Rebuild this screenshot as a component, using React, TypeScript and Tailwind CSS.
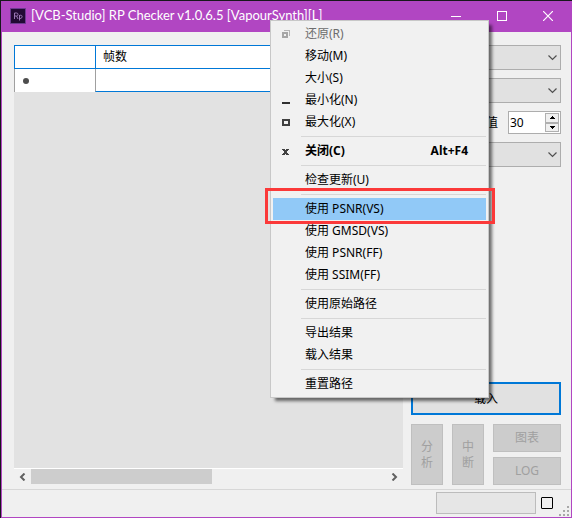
import type { ReactNode } from "react";

const latin = "font-['Noto_Sans','Noto_Sans_CJK_SC',sans-serif]";

type Entry =
  | { kind: "separator" }
  | {
      kind: "item";
      label: string;
      shortcut?: string;
      icon?: ReactNode;
      disabled?: boolean;
      bold?: boolean;
      active?: boolean;
    };

const separator: Entry = { kind: "separator" };

const restoreIcon = (
  <svg width="9" height="9" viewBox="0 0 9 9" fill="none" shapeRendering="crispEdges">
    <path d="M3 .5h5.500v5" stroke="#b5b5b5" />
    <path d="M2 3h4v4H2z" stroke="#a6a6a6" strokeWidth="2" />
  </svg>
);

const minimizeIcon = (
  <svg width="9" height="9" viewBox="0 0 9 9" shapeRendering="crispEdges">
    <path d="M1 6h8v2H1z" fill="#303030" />
  </svg>
);

const maximizeIcon = (
  <svg width="9" height="9" viewBox="0 0 9 9" shapeRendering="crispEdges">
    <path d="M1 1h8v7H1zM3 3v3h4V3z" fill="#404040" fillRule="evenodd" />
  </svg>
);

const closeIcon = (
  <svg width="9" height="9" viewBox="0 0 9 9" shapeRendering="crispEdges">
    <path
      d="M1 2h3v1h1V2h3v1H7v1H6v2h1v1h1v1H5V7H4v1H1V7h1V6h1V4H2V3H1z"
      fill="#404040"
    />
  </svg>
);

const entries: Entry[] = [
  { kind: "item", label: "还原(R)", icon: restoreIcon, disabled: true },
  { kind: "item", label: "移动(M)" },
  { kind: "item", label: "大小(S)" },
  { kind: "item", label: "最小化(N)", icon: minimizeIcon },
  { kind: "item", label: "最大化(X)", icon: maximizeIcon },
  separator,
  { kind: "item", label: "关闭(C)", shortcut: "Alt+F4", icon: closeIcon, bold: true },
  separator,
  { kind: "item", label: "检查更新(U)" },
  separator,
  { kind: "item", label: "使用 PSNR(VS)", active: true },
  { kind: "item", label: "使用 GMSD(VS)" },
  { kind: "item", label: "使用 PSNR(FF)" },
  { kind: "item", label: "使用 SSIM(FF)" },
  separator,
  { kind: "item", label: "使用原始路径" },
  separator,
  { kind: "item", label: "导出结果" },
  { kind: "item", label: "载入结果" },
  separator,
  { kind: "item", label: "重置路径" },
];

function SystemMenu() {
  return (
    <div
      role="menu"
      className="absolute top-5 left-[270px] z-10 w-[219px] border border-[#c8c8c8] bg-[#f1f1f1] p-0.5 shadow-[4px_4px_3px_-1px_rgba(0,0,0,0.55)]"
    >
      {entries.map((entry, index) =>
        entry.kind === "separator" ? (
          <div key={index} role="separator" className="ml-7 py-[3px]">
            <div className="h-px bg-[#d7d7d7]" />
          </div>
        ) : (
          <div key={index} className="relative">
            <button
              type="button"
              role="menuitem"
              disabled={entry.disabled}
              className={`flex h-[22px] w-full items-center pr-[18px] text-left ${
                entry.active ? "bg-[#91c9f7]" : ""
              } ${entry.disabled ? "text-[#6d6d6d]" : "text-black"} ${
                entry.bold ? "font-bold" : ""
              }`}
            >
              <span className="flex w-8 justify-start pl-2">{entry.icon}</span>
              <span className="flex-1">{entry.label}</span>
              <span>{entry.shortcut}</span>
            </button>
            {entry.active && (
              <div className="pointer-events-none absolute -top-2.5 -right-[9px] -bottom-1 -left-2 z-10 border-3 border-[#fb3939]" />
            )}
          </div>
        ),
      )}
    </div>
  );
}

function TitleBar() {
  return (
    <header className="flex h-[30px] shrink-0 items-center bg-[#b146c2] pb-0.5 pl-2 text-white">
      <svg width="16" height="16" viewBox="0 0 16 16" fill="none" className="mr-[5px]">
        <path d="M.5.5h15v15H.5z" fill="#210a33" stroke="#6c3b91" />
        <path
          d="M4.500 11v-6h2a1.500 1.500 0 0 1 0 3h-2m2 0 1.500 3M9.500 12.500V7m0 .5c3.500-1.500 3.500 3.500 0 3"
          stroke="#9a78b5"
        />
      </svg>
      <h1 className="flex-1 truncate font-['Lato','Noto_Sans_CJK_SC',sans-serif] text-[13px]">
        [VCB-Studio] RP Checker v1.0.6.5 [VapourSynth][L]
      </h1>
      <button type="button" aria-label="最小化" className="flex h-full w-[46px] items-center justify-center">
        <svg width="10" height="10" stroke="white" fill="none" shapeRendering="crispEdges">
          <path d="M0 5.500h10" />
        </svg>
      </button>
      <button type="button" aria-label="最大化" className="flex h-full w-[46px] items-center justify-center">
        <svg width="10" height="10" stroke="white" fill="none" shapeRendering="crispEdges">
          <path d="M.5.5h9v9h-9z" />
        </svg>
      </button>
      <button type="button" aria-label="关闭" className="flex h-full w-[46px] items-center justify-center">
        <svg width="10" height="10" stroke="white" fill="none">
          <path d="m0 0 10 10M10 0 0 10" strokeWidth="1.200" />
        </svg>
      </button>
    </header>
  );
}

function ResultTable() {
  return (
    <section className="flex min-w-0 flex-1 flex-col">
      <div className="flex-1 bg-[#e2e2e2]">
        <table className="w-full table-fixed border-separate border-spacing-0 bg-white text-left">
          <thead>
            <tr className="h-6">
              <th className="w-[81px] border-y border-l border-[#0078d7]" aria-label="行" />
              <th className="border border-[#0078d7] px-[7px] py-0 font-normal">帧数</th>
            </tr>
          </thead>
          <tbody>
            <tr className="h-[23px]">
              <td className="border-l border-[#a0a0a0] px-2 py-0">
                <div className="size-1.5 rounded-full bg-[#4d4d4d]" />
              </td>
              <td className="border-b border-l border-b-[#0078d7] border-l-[#a0a0a0]" />
            </tr>
          </tbody>
        </table>
      </div>
      <div className="flex h-[17px] items-stretch border-t border-white pb-px">
        <button type="button" aria-label="向左滚动" className="flex w-[17px] items-center justify-center">
          <svg width="7" height="8" fill="none" stroke="#606060" strokeWidth="2">
            <path d="M5.500.5 2 4l3.500 3.500" />
          </svg>
        </button>
        <div className="flex-1">
          <div className="h-full w-[51%] bg-[#cdcdcd]" />
        </div>
        <button type="button" aria-label="向右滚动" className="flex w-[17px] items-center justify-center">
          <svg width="7" height="8" fill="none" stroke="#606060" strokeWidth="2">
            <path d="M1.500.5 5 4 1.500 7.500" />
          </svg>
        </button>
      </div>
    </section>
  );
}

function Dropdown({ label }: { label: string }) {
  return (
    <div className="relative">
      <select
        aria-label={label}
        className="block h-[25px] w-full appearance-none border border-[#adadad] bg-[#e1e1e1] px-1"
      >
        <option />
      </select>
      <svg
        width="9"
        height="6"
        fill="none"
        stroke="#505050"
        className="pointer-events-none absolute top-2.5 right-1"
      >
        <path d="m.5.5 4 4 4-4" strokeWidth="1.200" />
      </svg>
    </div>
  );
}

function ThresholdField() {
  return (
    <div className="flex items-center justify-end gap-2.5">
      <label htmlFor="threshold">阈值</label>
      <div className="flex h-[23px] w-[53px] border border-[#adadad] bg-white p-px">
        <input
          id="threshold"
          type="text"
          inputMode="numeric"
          defaultValue="30"
          className="w-full min-w-0 flex-1 text-black outline-none"
        />
        <div className="flex w-3.5 flex-col">
          <button
            type="button"
            aria-label="增加"
            className="flex flex-1 items-center justify-center border border-[#b0b0b0] bg-[#f0f0f0]"
          >
            <svg width="5" height="3" fill="black" shapeRendering="crispEdges">
              <path d="M2 0h1v1h1v1h1v1H0V2h1V1h1z" />
            </svg>
          </button>
          <button
            type="button"
            aria-label="减少"
            className="flex flex-1 items-center justify-center border border-[#b0b0b0] bg-[#f0f0f0]"
          >
            <svg width="5" height="3" fill="black" shapeRendering="crispEdges">
              <path d="M0 0h5v1H4v1H3v1H2V2H1V1H0z" />
            </svg>
          </button>
        </div>
      </div>
    </div>
  );
}

const disabledButton = "border border-[#bfbfbf] bg-[#cccccc] text-[#a0a0a0]";

function ControlPanel() {
  return (
    <aside className="flex w-[150px] shrink-0 flex-col gap-2">
      <Dropdown label="原始文件" />
      <Dropdown label="处理文件" />
      <ThresholdField />
      <Dropdown label="平面" />
      <button
        type="button"
        className="mt-auto mb-px h-[33px] border-2 border-[#0078d7] bg-[#e1e1e1] text-black"
      >
        载入
      </button>
      <div className="flex h-[61px] gap-[9px]">
        <button type="button" disabled className={`w-8 px-2 leading-4 ${disabledButton}`}>
          分析
        </button>
        <button type="button" disabled className={`w-8 px-2 leading-4 ${disabledButton}`}>
          中断
        </button>
        <div className="flex flex-1 flex-col gap-[5px]">
          <button type="button" disabled className={`flex-1 ${disabledButton}`}>
            图表
          </button>
          <button type="button" disabled className={`flex-1 ${disabledButton}`}>
            LOG
          </button>
        </div>
      </div>
    </aside>
  );
}

function StatusBar() {
  return (
    <footer className="flex h-7 shrink-0 items-center justify-end border-t border-[#d7d7d7] pr-0.5 pb-px">
      <div className="mr-[5px] h-[22px] w-[100px] border border-[#bcbcbc] bg-[#e6e6e6]" />
      <input
        type="checkbox"
        aria-label="状态"
        className="mr-1.5 size-3 appearance-none rounded-[1px] border border-black bg-[#f0f0f0]"
      />
      <svg width="10" height="10" fill="#a8a8a8" className="self-end" shapeRendering="crispEdges">
        <path d="M8 0h2v2H8zM4 4h2v2H4zM8 4h2v2H8zM0 8h2v2H0zM4 8h2v2H4zM8 8h2v2H8z" />
      </svg>
    </footer>
  );
}

export default function App() {
  return (
    <div className={`relative flex min-h-screen bg-[#18181b] pt-px pl-px text-xs ${latin}`}>
      <div className="flex min-w-0 flex-1 flex-col border border-[#b146c2] bg-[#f0f0f0] text-black">
        <TitleBar />
        <main className="flex flex-1 gap-2 pt-[13px] pr-2.5 pb-1 pl-3">
          <ResultTable />
          <ControlPanel />
        </main>
        <StatusBar />
      </div>
      <SystemMenu />
    </div>
  );
}
